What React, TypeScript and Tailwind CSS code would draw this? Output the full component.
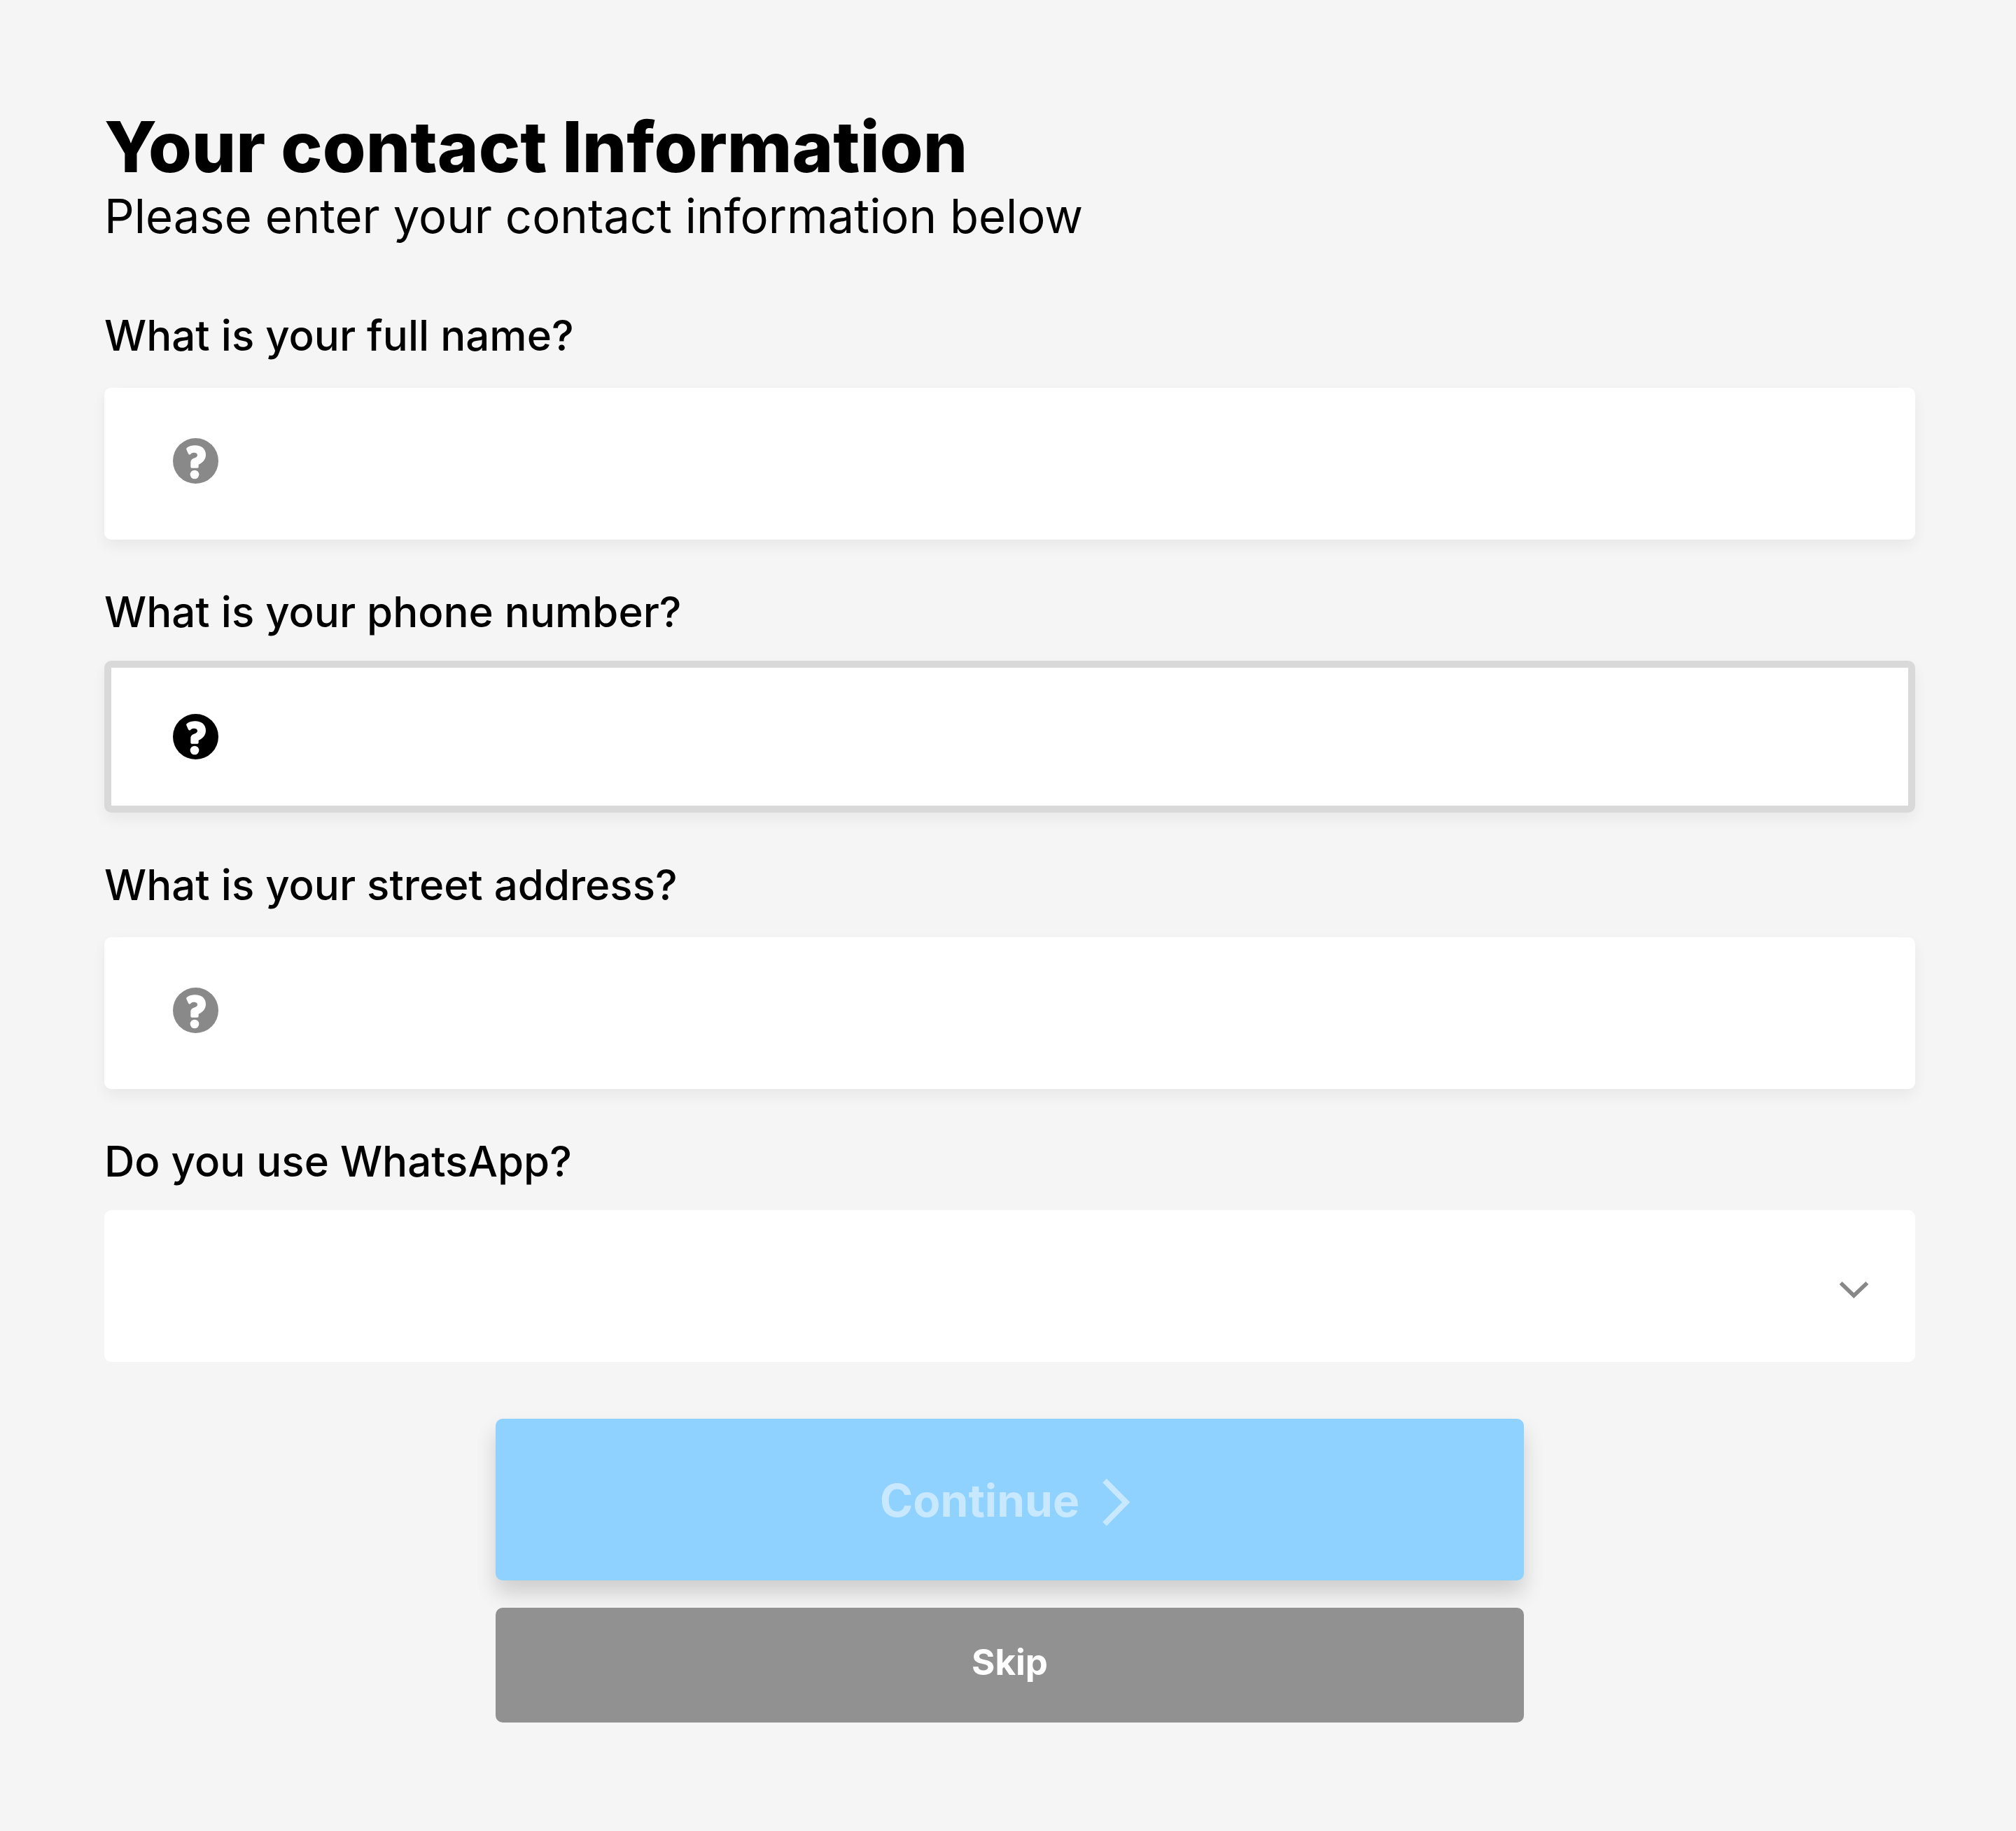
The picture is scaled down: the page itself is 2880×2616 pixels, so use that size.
import { useState } from "react";
import { clsx } from "clsx";

const fields = [
  { id: "full-name", label: "What is your full name?", type: "text" },
  { id: "phone", label: "What is your phone number?", type: "tel" },
  { id: "street-address", label: "What is your street address?", type: "text" },
];

const rowClass = "flex flex-col gap-[39px] even:gap-[34px]";
const labelClass = "self-start text-[60px] font-medium leading-[72px]";

function HelpIcon({ className }: { className?: string }) {
  return (
    <svg viewBox="0 0 195 195" className={clsx("size-[65px] shrink-0", className)} aria-hidden="true">
      <circle cx="97.5" cy="97.5" r="97.5" fill="currentColor" />
      <path
        d="M60 41Q76 31 95 31C123 31 141 46 141 71C141 92 127 105 110 113V123Q110 128 105 128H81Q76 128 76 123V103Q76 94 86 88C97 83 105 81 105 73C105 65 98 62 89 62Q81 62 75 69Q70 73 66 67L58 49Q56 44 60 41Z"
        fill="white"
      />
      <circle cx="93" cy="156" r="19" fill="white" />
    </svg>
  );
}

export default function App() {
  const [activeId, setActiveId] = useState("phone");
  const [values, setValues] = useState<Record<string, string>>({});
  const [whatsApp, setWhatsApp] = useState("");
  const isComplete = fields.every((field) => values[field.id]) && whatsApp !== "";

  return (
    <main className="min-h-screen bg-[#f5f5f5] pt-40 pr-36 pb-[155px] pl-[149px] font-['Inter',sans-serif] text-black">
      <header>
        <h1 className="text-[100px] font-extrabold leading-[100px]">Your contact Information</h1>
        <p className="mt-2 text-[67px] leading-[82px]">Please enter your contact information below</p>
      </header>

      <form onSubmit={(event) => event.preventDefault()} className="mt-[93px]">
        <div className="flex flex-col gap-[67px]">
          {fields.map((field) => {
            const isActive = field.id === activeId;

            return (
              <div key={field.id} className={rowClass}>
                <label htmlFor={field.id} className={labelClass}>
                  {field.label}
                </label>
                <div
                  className={clsx(
                    "flex h-[217px] items-center gap-10 rounded-[10px] bg-white shadow-[0_9px_20px_rgba(0,0,0,0.055)]",
                    isActive ? "border-[10px] border-[#d9d9d9] px-[88px]" : "px-[98px] pb-2",
                  )}
                >
                  <HelpIcon className={isActive ? "text-black" : "text-[#898989]"} />
                  <input
                    id={field.id}
                    type={field.type}
                    value={values[field.id] ?? ""}
                    onFocus={() => setActiveId(field.id)}
                    onChange={(event) => setValues({ ...values, [field.id]: event.target.value })}
                    className="h-full min-w-0 flex-1 bg-transparent text-[60px] outline-none"
                  />
                </div>
              </div>
            );
          })}

          <div className={rowClass}>
            <label htmlFor="whatsapp" className={labelClass}>
              Do you use WhatsApp?
            </label>
            <div className="relative h-[217px]">
              <select
                id="whatsapp"
                value={whatsApp}
                onChange={(event) => setWhatsApp(event.target.value)}
                className="size-full appearance-none rounded-[10px] bg-white px-[98px] text-[60px] outline-none"
              >
                <option value="" />
                <option value="yes">Yes</option>
                <option value="no">No</option>
              </select>
              <div className="pointer-events-none absolute inset-y-0 right-[67px] flex items-center">
                <svg viewBox="0 0 126 126" className="size-[42px]" aria-hidden="true">
                  <path d="M8 48L64 102L121 48" fill="none" stroke="#888888" strokeWidth="17" />
                </svg>
              </div>
            </div>
          </div>
        </div>

        <div className="mx-auto mt-[81px] flex w-[1469px] max-w-full flex-col gap-[39px]">
          <button
            type="submit"
            disabled={!isComplete}
            className="flex h-[231px] items-center justify-center gap-8 rounded-[10px] bg-[#0099ff] pt-0.5 text-[64px] font-bold text-white shadow-[0_18px_30px_rgba(0,0,0,0.16)] disabled:bg-[#8fd1ff] disabled:text-[#c7e8ff]"
          >
            Continue
            <svg viewBox="0 0 162 216" className="h-[72px] w-[54px]" aria-hidden="true">
              <path d="M12 22L104 115L12 208" fill="none" stroke="currentColor" strokeWidth="24" />
            </svg>
          </button>
          <button
            type="button"
            className="flex h-[164px] items-center justify-center rounded-[10px] bg-[#919191] pb-2 text-[51px] font-bold text-white"
          >
            Skip
          </button>
        </div>
      </form>
    </main>
  );
}
